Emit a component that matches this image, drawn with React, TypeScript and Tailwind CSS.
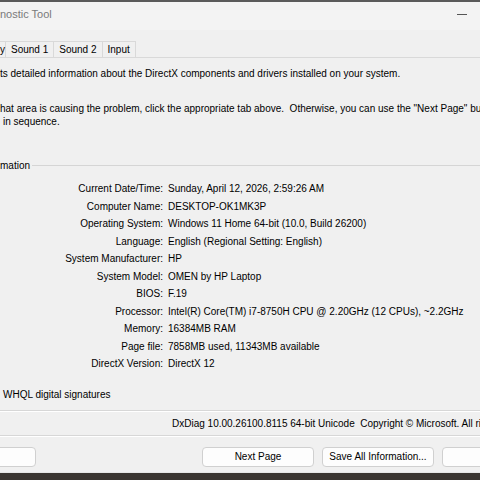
import React from 'react';

const rows: [string, string][] = [
  ['Current Date/Time:', 'Sunday, April 12, 2026, 2:59:26 AM'],
  ['Computer Name:', 'DESKTOP-OK1MK3P'],
  ['Operating System:', 'Windows 11 Home 64-bit (10.0, Build 26200)'],
  ['Language:', 'English (Regional Setting: English)'],
  ['System Manufacturer:', 'HP'],
  ['System Model:', 'OMEN by HP Laptop'],
  ['BIOS:', 'F.19'],
  ['Processor:', 'Intel(R) Core(TM) i7-8750H CPU @ 2.20GHz (12 CPUs), ~2.2GHz'],
  ['Memory:', '16384MB RAM'],
  ['Page file:', '7858MB used, 11343MB available'],
  ['DirectX Version:', 'DirectX 12'],
];

function Tab({ label, first }: { label: string; first?: boolean }) {
  return (
    <div
      className={
        'h-[16px] flex items-center border-t border-r border-[#d9d9d9] bg-[#f0f0f0] ' +
        (first ? 'px-0 border-l-0' : 'px-[5px]')
      }
    >
      {label}
    </div>
  );
}

function Button({ label, className }: { label: string; className: string }) {
  return (
    <div
      className={
        'h-[20px] flex items-center justify-center rounded-[4px] border border-[#d0d0d0] bg-[#fdfdfd] shrink-0 ' +
        className
      }
    >
      {label}
    </div>
  );
}

export default function App() {
  return (
    <div
      className="w-[480px] h-[480px] overflow-hidden bg-[#f0f0f0] text-black text-[10px] leading-[13px] flex flex-col whitespace-nowrap"
      style={{ fontFamily: '"Liberation Sans", Arial, sans-serif' }}
    >
      <div className="h-[2px] bg-[#5a5a5a] shrink-0" />
      {/* title bar */}
      <div className="h-[28px] shrink-0 flex items-center justify-between bg-[#f3f3f3]">
        <span className="text-[#7a7a7a] text-[11px] -mt-[3px]">nostic Tool</span>
        <div className="w-[10px] h-[1px] bg-[#555] mr-[13px] -mt-[4px]" />
      </div>

      {/* tabs */}
      <div className="mt-[11px] flex items-end border-b border-[#d9d9d9] shrink-0">
        <Tab label="y" first />
        <Tab label="Sound 1" />
        <Tab label="Sound 2" />
        <Tab label="Input" />
      </div>

      <div className="mt-[9px]">ts detailed information about the DirectX components and drivers installed on your system.</div>

      <div className="mt-[22px]">
        hat area is causing the problem, click the appropriate tab above.&nbsp; Otherwise, you can use the "Next Page" button
      </div>
      <div className="pl-[3px]">in sequence.</div>

      {/* group */}
      <div className="mt-[31px] flex items-center">
        <span>mation</span>
        <div className="flex-1 ml-[2px] border-t border-[#d5d5d5] border-b-white -mt-[1px]" />
      </div>

      <div className="mt-[8px] flex flex-col">
        {rows.map(([k, v]) => (
          <div key={k} className="h-[17.5px] flex items-center">
            <div className="w-[163px] text-right shrink-0">{k}</div>
            <div className="pl-[5px]">{v}</div>
          </div>
        ))}
      </div>

      <div className="mt-[15px] pl-[3px]">WHQL digital signatures</div>

      <div className="mt-[9px] border-t border-[#d7d7d7] border-b border-b-white" />
      <div className="h-[23px] flex items-center pl-[172px]">
        DxDiag 10.00.26100.8115 64-bit Unicode&nbsp; Copyright © Microsoft. All rights reserved.
      </div>
      <div className="border-t border-[#d7d7d7] border-b border-b-white" />

      <div className="mt-[10px] flex items-center">
        <Button label="" className="w-[48px] -ml-[12px]" />
        <Button label="Next Page" className="w-[112px] ml-[166px]" />
        <Button label="Save All Information..." className="w-[112px] ml-[8px]" />
        <Button label="" className="w-[60px] ml-[8px]" />
      </div>

      <div className="mt-[5px] h-[1px] bg-[#e6e6e6] shrink-0" />
      <div className="flex-1 bg-[#3a3531]" />
    </div>
  );
}
